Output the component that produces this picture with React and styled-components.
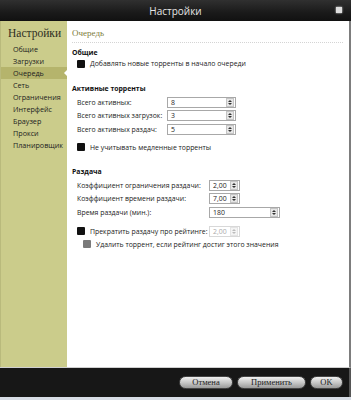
import React from 'react';
import styled, {createGlobalStyle} from 'styled-components';

const Global = createGlobalStyle`
  html, body {
    margin: 0;
    padding: 0;
    background: #d8dde6;
  }
  * {
    box-sizing: border-box;
  }
`;

const Window = styled.div`
  display: flex;
  flex-direction: column;
  width: 351px;
  height: 400px;
  background: #d8dde6;
  font-family: "Open Sans", "Noto Sans", sans-serif;
  overflow: hidden;
`;

const TitleBar = styled.div`
  position: relative;
  display: flex;
  justify-content: center;
  align-items: center;
  height: 21px;
  background: linear-gradient(#303030, #1a1a1a 60%, #111);
  color: #e6e6e6;
  font-size: 10px;
`;

const Close = styled.span`
  position: absolute;
  right: 9px;
  top: 7px;
  width: 6px;
  height: 6px;
  background: #ddd;
  box-shadow: 0 0 2px #fff;
`;

const Main = styled.div`
  display: flex;
  flex: 1;
  border-right: 2px solid #7d7d7d;
  border-bottom: 1px solid #cfcfcf;
`;

const Sidebar = styled.div`
  display: flex;
  flex-direction: column;
  width: 67px;
  background: #cbcc8b;
  border-left: 1px solid #b9ba7c;
`;

const SideTitle = styled.div`
  font-family: "Liberation Serif", serif;
  font-size: 11.5px;
  color: #2e2e22;
  padding: 6px 0 0 7px;
  height: 22px;
  white-space: nowrap;
`;

const NavItem = styled.div`
  position: relative;
  height: 12px;
  line-height: 12px;
  padding-left: 12px;
  font-size: 7.2px;
  color: #222;
  background: ${p => (p.$active ? '#b5b46c' : 'transparent')};

  ${p => p.$active && `
    &::after {
      content: '';
      position: absolute;
      right: 0;
      top: 3px;
      border-top: 3px solid transparent;
      border-bottom: 3px solid transparent;
      border-right: 3px solid #fff;
    }
  `}
`;

const Content = styled.div`
  display: flex;
  flex-direction: column;
  flex: 1;
  background: #fff;
  padding: 0 6px 0 5px;
`;

const Heading = styled.div`
  margin-top: 6px;
  height: 12px;
  line-height: 12px;
  font-family: "Liberation Serif", serif;
  font-size: 9px;
  color: #7e7e3c;
`;

const Separator = styled.div`
  margin-top: 3px;
  border-top: 1px dotted #d4d4d4;
`;

const SectionTitle = styled.div`
  margin-top: ${p => p.$mt}px;
  height: 10px;
  line-height: 10px;
  font-size: 6.9px;
  font-weight: bold;
  color: #111;
`;

const Row = styled.div`
  display: flex;
  align-items: center;
  margin-top: ${p => p.$mt || 0}px;
  height: ${p => p.$h || 13.5}px;
  padding-left: ${p => p.$indent || 5}px;
  font-size: 6.9px;
  color: #222;
`;

const Label = styled.span`
  width: ${p => p.$w}px;
  white-space: nowrap;
`;

const Box = styled.span`
  display: inline-block;
  width: 8px;
  height: 8px;
  margin-right: 5px;
  background: ${p => (p.$muted ? '#7a7a7a' : '#111')};
  border-radius: 1px;
`;

const Spin = styled.div`
  display: flex;
  align-items: center;
  justify-content: space-between;
  width: ${p => p.$w}px;
  height: 11px;
  border: 1px solid ${p => (p.$disabled ? '#d8d8d8' : '#a8a8a8')};
  background: #fff;
  color: ${p => (p.$disabled ? '#aaa' : '#222')};
  padding-left: 3px;
  font-size: 6.9px;
`;

const Arrows = styled.div`
  display: flex;
  flex-direction: column;
  justify-content: center;
  align-items: center;
  gap: 1px;
  width: 8px;
  height: 9px;
  margin-right: 1px;
  background: ${p => (p.$disabled ? '#f4f4f4' : '#e6e6e6')};
  border: 1px solid ${p => (p.$disabled ? '#e4e4e4' : '#c4c4c4')};
`;

const Up = styled.span`
  border-left: 2px solid transparent;
  border-right: 2px solid transparent;
  border-bottom: 2px solid ${p => (p.$disabled ? '#bbb' : '#333')};
`;

const Down = styled.span`
  border-left: 2px solid transparent;
  border-right: 2px solid transparent;
  border-top: 2px solid ${p => (p.$disabled ? '#bbb' : '#333')};
`;

const Footer = styled.div`
  display: flex;
  justify-content: flex-end;
  align-items: center;
  gap: 4px;
  height: 29px;
  padding-right: 6px;
  background: #171717;
  border-right: 2px solid #555;
`;

const Button = styled.button`
  width: ${p => p.$w}px;
  height: 13px;
  padding: 0;
  border: 1px solid #444;
  border-radius: 7px;
  background: linear-gradient(#f0f0f0, #c8c8c8 50%, #9a9a9a);
  font-family: "Liberation Serif", serif;
  font-size: 8.5px;
  color: #222;
  line-height: 11px;
`;

const Strip = styled.div`
  height: 3px;
  background: #d8dde6;
`;

const Spinner = ({value, w, disabled}) => (
  <Spin $w={w} $disabled={disabled}>
    {value}
    <Arrows $disabled={disabled}>
      <Up $disabled={disabled}/>
      <Down $disabled={disabled}/>
    </Arrows>
  </Spin>
);

const nav = ['Общие', 'Загрузки', 'Очередь', 'Сеть', 'Ограничения', 'Интерфейс', 'Браузер', 'Прокси', 'Планировщик'];

export default function App() {
  return (
    <Window>
      <Global/>
      <TitleBar>
        Настройки
        <Close/>
      </TitleBar>
      <Main>
        <Sidebar>
          <SideTitle>Настройки</SideTitle>
          {nav.map(n => (
            <NavItem key={n} $active={n === 'Очередь'}>{n}</NavItem>
          ))}
        </Sidebar>
        <Content>
          <Heading>Очередь</Heading>
          <Separator/>
          <SectionTitle $mt={4.5}>Общие</SectionTitle>
          <Row $mt={1} $h={10}><Box/>Добавлять новые торренты в начало очереди</Row>

          <SectionTitle $mt={15.5}>Активные торренты</SectionTitle>
          <Row $mt={1.25}><Label $w={90}>Всего активных:</Label><Spinner value="8" w={69}/></Row>
          <Row><Label $w={90}>Всего активных загрузок:</Label><Spinner value="3" w={69}/></Row>
          <Row><Label $w={90}>Всего активных раздач:</Label><Spinner value="5" w={69}/></Row>
          <Row $mt={6.25} $h={10}><Box/>Не учитывать медленные торренты</Row>

          <SectionTitle $mt={15}>Раздача</SectionTitle>
          <Row $mt={1.25}><Label $w={132}>Коэффициент ограничения раздачи:</Label><Spinner value="2,00" w={31}/></Row>
          <Row><Label $w={132}>Коэффициент времени раздачи:</Label><Spinner value="7,00" w={31}/></Row>
          <Row><Label $w={132}>Время раздачи (мин.):</Label><Spinner value="180" w={71}/></Row>
          <Row $mt={5.5}><Box/><Label $w={119}>Прекратить раздачу про рейтинге:</Label><Spinner value="2,00" w={31} disabled/></Row>
          <Row $mt={1.5} $h={10} $indent={11}><Box $muted/>Удалить торрент, если рейтинг достиг этого значения</Row>
        </Content>
      </Main>
      <Footer>
        <Button $w={54}>Отмена</Button>
        <Button $w={69}>Применить</Button>
        <Button $w={33}>OK</Button>
      </Footer>
      <Strip/>
    </Window>
  );
}
